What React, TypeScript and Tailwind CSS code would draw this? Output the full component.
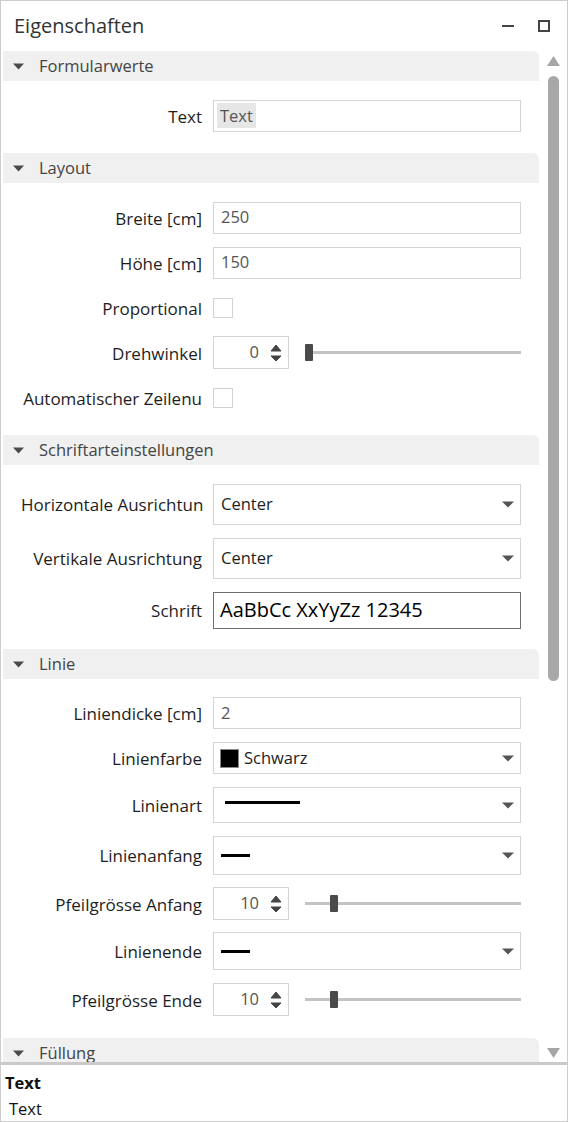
import React from "react";

const font = { fontFamily: '"Open Sans", "Noto Sans", sans-serif' };

function Caret() {
  return (
    <svg width="11" height="7" viewBox="0 0 11 7" className="shrink-0">
      <path d="M0 0.5 L11 0.5 L5.5 6.5 Z" fill="#4a4a4a" />
    </svg>
  );
}

function DropArrow() {
  return (
    <svg width="12" height="7" viewBox="0 0 12 7" className="ml-auto mr-[4px] shrink-0">
      <path d="M0 0.5 L12 0.5 L6 6.5 Z" fill="#555" />
    </svg>
  );
}

function Header({ title }: { title: string }) {
  return (
    <div className="h-[30px] bg-[#f0f0f0] rounded-tr-[6px] flex items-center pl-[10px] shrink-0">
      <Caret />
      <span className="ml-[15px] text-[16.5px] text-[#444]">{title}</span>
    </div>
  );
}

function Row({ label, h, children }: { label: string; h: number; children: React.ReactNode }) {
  return (
    <div className="flex items-center pl-[18px] pr-[18px]" style={{ height: h }}>
      <div className="w-[182px] shrink-0 overflow-hidden whitespace-nowrap text-right text-[17px] text-[#1e1e1e] pr-[1px] pt-[2px]">
        {label}
      </div>
      <div className="ml-[10px] flex-1 flex items-center min-w-0">{children}</div>
    </div>
  );
}

function TextBox({ value, highlight }: { value: string; highlight?: boolean }) {
  return (
    <div className="h-[32px] w-full border border-[#d4d4d4] bg-white flex items-center pl-[3px] text-[16.5px] text-[#555]">
      <span className={highlight ? "bg-[#e6e6e6] px-[3px] leading-[25px]" : "px-[4px]"}>{value}</span>
    </div>
  );
}

function Check() {
  return <div className="w-[20px] h-[20px] border border-[#d2d2d2] bg-white" />;
}

function Spinner({ value }: { value: string }) {
  return (
    <div className="h-[33px] w-[76px] shrink-0 border border-[#d4d4d4] bg-white flex items-center">
      <span className="flex-1 text-right text-[16.5px] text-[#555] pr-[11px]">{value}</span>
      <svg width="12" height="20" viewBox="0 0 12 20" className="mr-[6px]">
        <path d="M1 8 L6 2 L11 8 Z" fill="#444" stroke="#444" strokeLinejoin="round" strokeWidth="1" />
        <path d="M1 13 L6 18 L11 13 Z" fill="#444" stroke="#444" strokeLinejoin="round" strokeWidth="1" />
      </svg>
    </div>
  );
}

function Slider({ offset }: { offset: number }) {
  return (
    <div className="ml-[16px] flex-1 relative h-[17px] flex items-center">
      <div className="h-[3px] w-full bg-[#c4c4c4]" />
      <div className="absolute top-0 w-[8px] h-[17px] bg-[#4a4a4a] rounded-[1px]" style={{ left: offset }} />
    </div>
  );
}

function Combo({ h, children }: { h: number; children?: React.ReactNode }) {
  return (
    <div className="w-full border border-[#d4d4d4] bg-white flex items-center pl-[7px] pr-[2px] text-[16.5px] text-[#1e1e1e]" style={{ height: h }}>
      {children}
      <DropArrow />
    </div>
  );
}

export default function App() {
  return (
    <div style={font} className="w-[568px] h-[1122px] border border-[#cdcdcd] bg-white flex flex-col overflow-hidden">
      <div className="h-[50px] shrink-0 flex items-center pl-[13px]">
        <span className="text-[20px] text-[#333] leading-none">Eigenschaften</span>
        <div className="ml-auto flex items-center">
          <div className="w-[12px] h-[2px] bg-[#444]" />
          <div className="ml-[24px] mr-[17px] w-[12px] h-[12px] border-2 border-[#444]" />
        </div>
      </div>

      <div className="flex-1 flex min-h-0">
        <div className="flex-1 min-w-0 overflow-hidden pl-[2px] pr-[3px]">
          <Header title="Formularwerte" />
          <div className="pt-[12px] pb-[15px]">
            <Row label="Text" h={45}>
              <TextBox value="Text" highlight />
            </Row>
          </div>

          <Header title="Layout" />
          <div className="pt-[12px] pb-[15px]">
            <Row label="Breite [cm]" h={45}>
              <TextBox value="250" />
            </Row>
            <Row label="Höhe [cm]" h={45}>
              <TextBox value="150" />
            </Row>
            <Row label="Proportional" h={45}>
              <Check />
            </Row>
            <Row label="Drehwinkel" h={45}>
              <Spinner value="0" />
              <Slider offset={0} />
            </Row>
            <Row label="Automatischer Zeilenu" h={45}>
              <Check />
            </Row>
          </div>

          <Header title="Schriftarteinstellungen" />
          <div className="pt-[12px] pb-[14px]">
            <Row label="Horizontale Ausrichtun" h={54}>
              <Combo h={41}>Center</Combo>
            </Row>
            <Row label="Vertikale Ausrichtung" h={54}>
              <Combo h={41}>Center</Combo>
            </Row>
            <Row label="Schrift" h={50}>
              <div className="h-[37px] w-full border border-[#6e6e6e] bg-white flex items-center pl-[6px] text-[20px] text-black">
                AaBbCc XxYyZz 12345
              </div>
            </Row>
          </div>

          <Header title="Linie" />
          <div className="pt-[12px] pb-[15px]">
            <Row label="Liniendicke [cm]" h={44}>
              <TextBox value="2" />
            </Row>
            <Row label="Linienfarbe" h={46}>
              <Combo h={32}>
                <div className="w-[19px] h-[19px] bg-black border border-[#888] mr-[5px] -ml-[1px]" />
                <span>Schwarz</span>
              </Combo>
            </Row>
            <Row label="Linienart" h={48}>
              <Combo h={36}>
                <div className="self-start mt-[13px] ml-[4px] w-[75px] h-[3px] bg-black" />
              </Combo>
            </Row>
            <Row label="Linienanfang" h={52}>
              <Combo h={39}>
                <div className="w-[29px] h-[3px] bg-black" />
              </Combo>
            </Row>
            <Row label="Pfeilgrösse Anfang" h={45}>
              <Spinner value="10" />
              <Slider offset={25} />
            </Row>
            <Row label="Linienende" h={50}>
              <Combo h={38}>
                <div className="w-[29px] h-[3px] bg-black" />
              </Combo>
            </Row>
            <Row label="Pfeilgrösse Ende" h={47}>
              <Spinner value="10" />
              <Slider offset={25} />
            </Row>
          </div>

          <Header title="Füllung" />
        </div>

        <div className="w-[25px] shrink-0 flex flex-col items-start pt-[5px] pb-[4px]">
          <svg width="13" height="10" viewBox="0 0 13 10" className="shrink-0 ml-[5px]">
            <path d="M0 10 L6.5 0 L13 10 Z" fill="#a6a6a6" />
          </svg>
          <div className="mt-[10px] h-[605px] w-[11px] rounded-full bg-[#a8a8a8] ml-[6px]" />
          <div className="flex-1" />
          <svg width="13" height="10" viewBox="0 0 13 10" className="shrink-0 ml-[5px]">
            <path d="M0 0 L13 0 L6.5 10 Z" fill="#a6a6a6" />
          </svg>
        </div>
      </div>

      <div className="h-[3px] shrink-0 bg-[#c9c9c9]" />
      <div className="h-[56px] shrink-0 pl-[4px] pt-[5px] text-[16.5px] text-[#111] leading-[26px]">
        <div className="font-bold">Text</div>
        <div className="pl-[4px]">Text</div>
      </div>
    </div>
  );
}
